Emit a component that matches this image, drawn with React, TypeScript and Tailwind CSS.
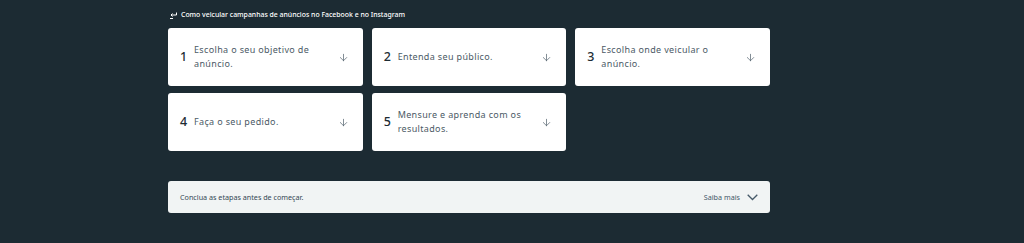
import {ArrowDown} from "lucide-react";

type Step = {
  n: number;
  text: string;
};

const steps: Step[] = [
  {n: 1, text: "Escolha o seu objetivo de anúncio."},
  {n: 2, text: "Entenda seu público."},
  {n: 3, text: "Escolha onde veicular o anúncio."},
  {n: 4, text: "Faça o seu pedido."},
  {n: 5, text: "Mensure e aprenda com os resultados."},
];

const StepCard = ({step}: {step: Step}) => (
  <div className="h-[58px] bg-white rounded-[3px] flex items-center pl-[12px] pr-[14px]">
    <span className="text-[12.5px] font-medium text-[#1c2b33] w-[14px] shrink-0">{step.n}</span>
    <span className="text-[9px] leading-[14px] text-[#4b5a66] tracking-[0.35px] flex-1 pr-[10px]">
      {step.text}
    </span>
    <ArrowDown size={11} strokeWidth={1.5} className="text-[#4b5a66] shrink-0"/>
  </div>
);

const App = () => {
  return (
    <div
      className="w-[1024px] h-[243px] bg-[#1c2b33] overflow-hidden"
      style={{fontFamily: "'Noto Sans', 'Liberation Sans', sans-serif"}}
    >
      <div className="ml-[168px] w-[602px] pt-[9px]">
        <div className="flex items-center h-[12px] text-white text-[6.9px] font-medium">
          <svg width="9" height="8" viewBox="0 0 9 8" className="ml-[1px] mr-[3px]">
            <path d="M7.5 1.5v2.5H2M2 4L3.5 2.5M2 4L3.5 5.5M1 7.5h3" stroke="white" strokeWidth="1" fill="none"/>
          </svg>
          Como veicular campanhas de anúncios no Facebook e no Instagram
        </div>

        <div className="grid grid-cols-3 gap-x-[9px] gap-y-[7px] mt-[7px]">
          {steps.map((s) => (
            <StepCard key={s.n} step={s}/>
          ))}
        </div>

        <div className="mt-[30px] h-[32px] bg-[#f1f4f4] rounded-[3px] flex items-center pl-[12px] pr-[12px]">
          <span className="text-[7.2px] text-[#344854] flex-1">Conclua as etapas antes de começar.</span>
          <span className="text-[7.2px] text-[#465a69] mr-[7px]">Saiba mais</span>
          <svg width="11" height="7" viewBox="0 0 11 7">
            <path d="M0.7 0.7L5.5 5.5L10.3 0.7" stroke="#465a69" strokeWidth="1.3" fill="none"/>
          </svg>
        </div>
      </div>
    </div>
  );
};

export default App;
